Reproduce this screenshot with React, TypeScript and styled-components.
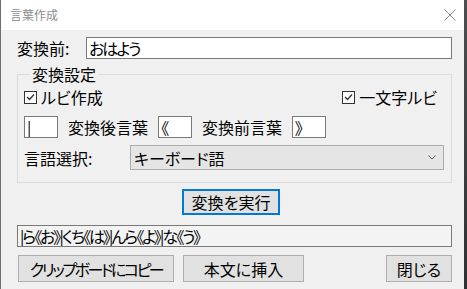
import React from "react";
import styled, { createGlobalStyle } from "styled-components";

const Global = createGlobalStyle`
  html, body { margin: 0; padding: 0; background: #3b3d3f; }
  body { font-family: "Noto Sans CJK JP", "Noto Sans", sans-serif; }
  * { box-sizing: border-box; }
`;

const Page = styled.div`
  width: 467px;
  height: 289px;
  display: flex;
  background: linear-gradient(#4b4f52, #2e3032);
  overflow: hidden;
`;

const Window = styled.div`
  width: 464px;
  height: 289px;
  border-left: 1px solid #6e6e6e;
  display: flex;
  flex-direction: column;
  background: #f0f0f0;
  font-family: "Noto Sans CJK JP", sans-serif;
  font-feature-settings: "palt";
  color: #000;
`;

const TitleBar = styled.div`
  height: 30px;
  flex: none;
  background: #fff;
  display: flex;
  align-items: center;
  justify-content: space-between;
  padding: 0 8px 1px 9px;
`;

const Title = styled.span`
  font-size: 12px;
  line-height: 14px;
  color: #8c8c8c;
`;

const Body = styled.div`
  flex: 1;
  display: flex;
  flex-direction: column;
  padding: 7px 12px 0 16px;
`;

const Row = styled.div<{ $mt?: number }>`
  display: flex;
  align-items: center;
  height: 22px;
  margin-top: ${(p) => p.$mt ?? 0}px;
`;

const Label = styled.span<{ $w?: number }>`
  font-size: 16px;
  line-height: 18px;
  white-space: nowrap;
  font-feature-settings: normal;
  ${(p) => (p.$w ? `width: ${p.$w}px; flex: none;` : "")}
`;

const TextBox = styled.div<{ $w?: number; $bg?: string; $ls?: number }>`
  height: 22px;
  ${(p) => (p.$w ? `width: ${p.$w}px; flex: none;` : "flex: 1;")}
  border: 1px solid #7a7a7a;
  background: ${(p) => p.$bg ?? "#fff"};
  font-size: 16px;
  line-height: 20px;
  padding-left: 2px;
  letter-spacing: ${(p) => p.$ls ?? 0}px;
  white-space: nowrap;
  overflow: hidden;
`;

const Group = styled.fieldset`
  margin: 6px 0 0 0;
  padding: 5px 7px 12px 6px;
  border: 1px solid #dcdcdc;
  min-width: 0;
`;

const Legend = styled.legend`
  margin-left: 6px;
  padding: 0 2px;
  font-size: 16px;
  line-height: 18px;
  font-feature-settings: normal;
`;

const CheckRow = styled.div`
  display: flex;
  align-items: center;
  height: 18px;
`;

const Check = styled.label<{ $push?: boolean }>`
  display: flex;
  align-items: center;
  gap: 4px;
  font-size: 16px;
  line-height: 18px;
  ${(p) => (p.$push ? "margin-left: auto; margin-right: 7px;" : "")}
`;

const Box = styled.span`
  width: 13px;
  height: 13px;
  flex: none;
  border: 1px solid #333;
  background: #fff;
  display: flex;
  align-items: center;
  justify-content: center;
`;

const InputsRow = styled.div`
  display: flex;
  align-items: center;
  gap: 10px;
  margin-top: 10px;
  height: 22px;
`;

const SelectRow = styled.div`
  display: flex;
  align-items: center;
  margin-top: 7px;
  height: 25px;
`;

const Select = styled.div`
  flex: 1;
  height: 25px;
  border: 1px solid #acacac;
  background: #e5e5e5;
  display: flex;
  align-items: center;
  justify-content: space-between;
  padding: 0 7px 0 3px;
  font-size: 16px;
  line-height: 18px;
`;

const Button = styled.div<{ $w: number; $h?: number; $primary?: boolean; $ls?: number }>`
  width: ${(p) => p.$w}px;
  height: ${(p) => p.$h ?? 27}px;
  flex: none;
  background: #e1e1e1;
  border: ${(p) => (p.$primary ? "2px solid #0078d7" : "1px solid #adadad")};
  display: flex;
  align-items: center;
  justify-content: center;
  font-size: 16px;
  line-height: 18px;
  letter-spacing: ${(p) => p.$ls ?? 0}px;
  white-space: nowrap;
`;

const CenterRow = styled.div`
  display: flex;
  justify-content: center;
  margin-top: 6px;
  padding-right: 7px;
`;

const ButtonRow = styled.div`
  display: flex;
  gap: 9px;
  margin-top: 8px;
  padding-left: 1px;
`;

const Spacer = styled.div`
  flex: 1;
`;

const CheckMark = () => (
  <svg width="9" height="8" viewBox="0 0 9 8">
    <polyline points="1,4 3.5,6.5 8,1.5" fill="none" stroke="#333" strokeWidth="1.3" />
  </svg>
);

export default function App() {
  return (
    <>
      <Global />
      <Page>
        <Window>
          <TitleBar>
            <Title>言葉作成</Title>
            <svg width="12" height="12" viewBox="0 0 12 12">
              <path d="M0.5 0.5 L11.5 11.5 M11.5 0.5 L0.5 11.5" stroke="#8a8a8a" strokeWidth="1" />
            </svg>
          </TitleBar>
          <Body>
            <Row>
              <Label $w={69}>変換前:</Label>
              <TextBox $ls={-2}>おはよう</TextBox>
            </Row>
            <Group>
              <Legend>変換設定</Legend>
              <CheckRow>
                <Check>
                  <Box>
                    <CheckMark />
                  </Box>
                  ルビ作成
                </Check>
                <Check $push>
                  <Box>
                    <CheckMark />
                  </Box>
                  一文字ルビ
                </Check>
              </CheckRow>
              <InputsRow>
                <TextBox $w={34}>|</TextBox>
                <Label>変換後言葉</Label>
                <TextBox $w={34}>《</TextBox>
                <Label>変換前言葉</Label>
                <TextBox $w={34}>》</TextBox>
              </InputsRow>
              <SelectRow>
                <Label $w={106}>言語選択:</Label>
                <Select>
                  キーボード語
                  <svg width="8" height="5" viewBox="0 0 8 5">
                    <polyline points="0.5,0.5 4,4 7.5,0.5" fill="none" stroke="#555" strokeWidth="1" />
                  </svg>
                </Select>
              </SelectRow>
            </Group>
            <CenterRow>
              <Button $w={98} $h={26} $primary>
                変換を実行
              </Button>
            </CenterRow>
            <Row $mt={10}>
              <TextBox $bg="#f3f3f3" $ls={-2}>
                |ら《お》|くち《は》|んら《よ》|な《う》
              </TextBox>
            </Row>
            <ButtonRow>
              <Button $w={156} $ls={-2.5}>
                クリップボードにコピー
              </Button>
              <Button $w={121}>本文に挿入</Button>
              <Spacer />
              <Button $w={66}>閉じる</Button>
            </ButtonRow>
          </Body>
        </Window>
      </Page>
    </>
  );
}
